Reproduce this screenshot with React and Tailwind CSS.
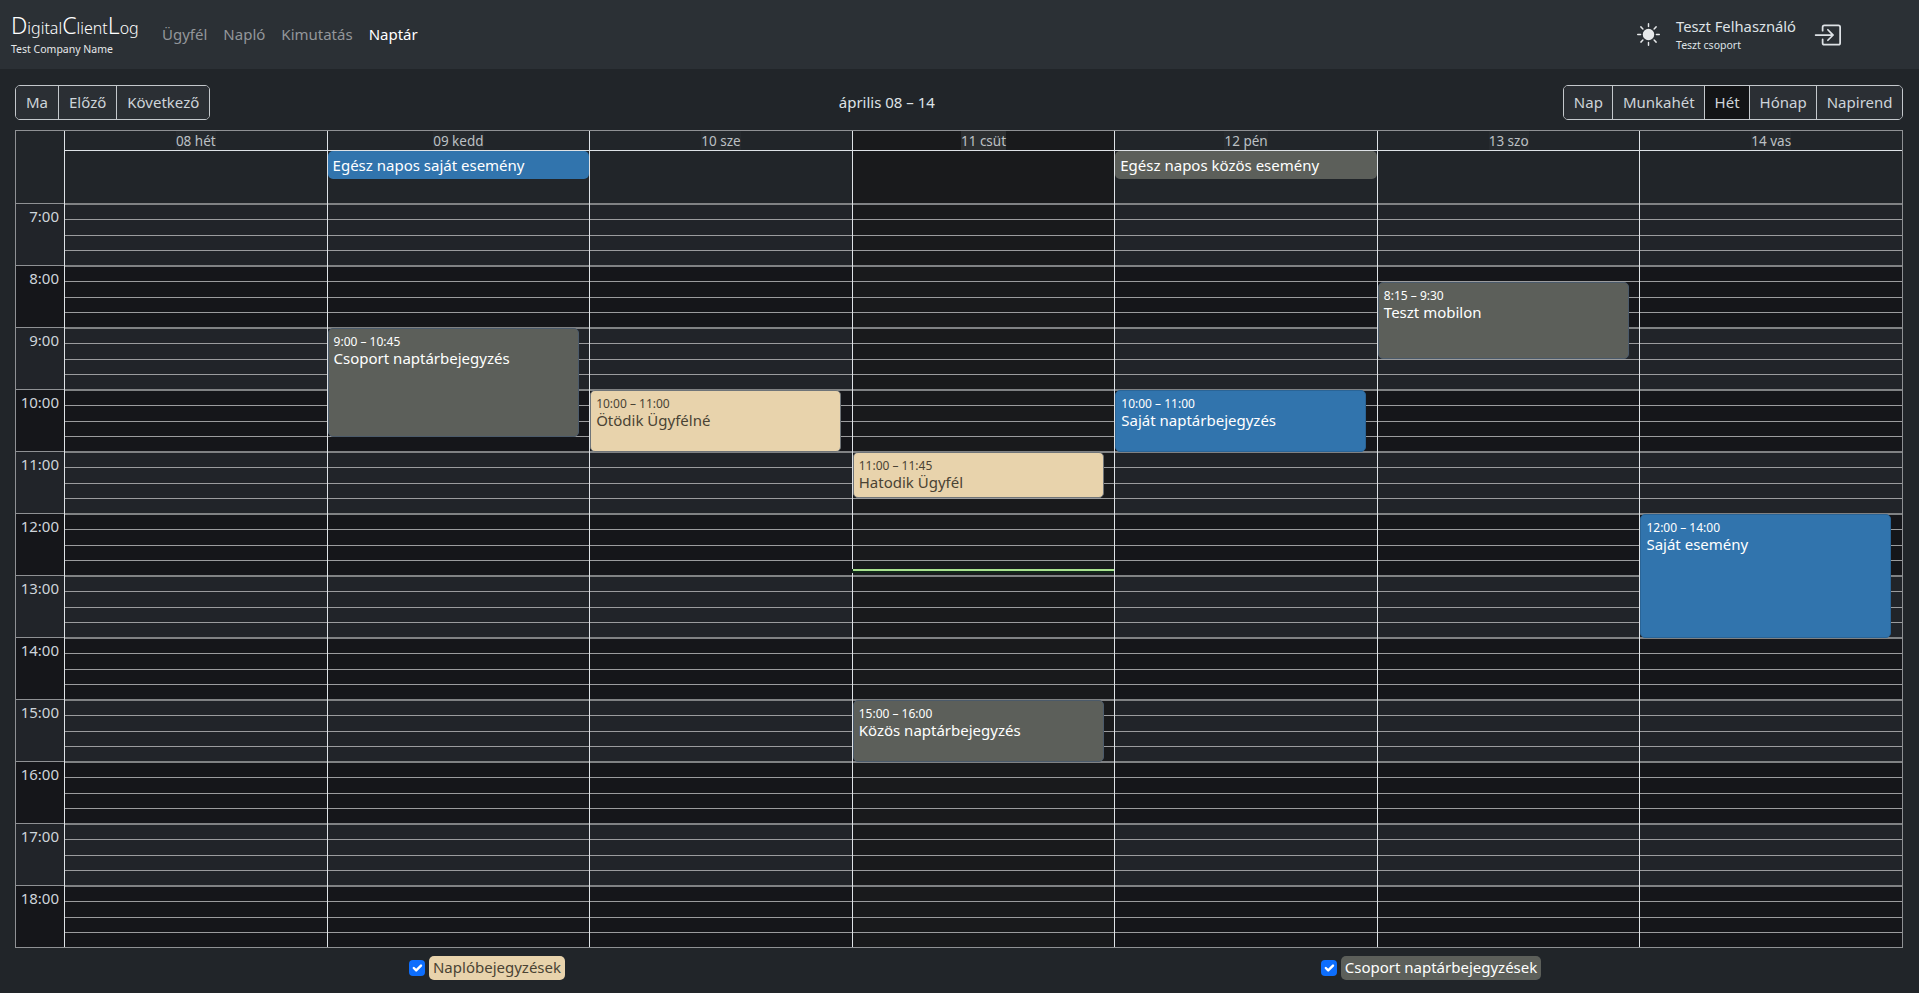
import React from "react";
import { BsBrightnessHighFill, BsBoxArrowInRight } from "react-icons/bs";

const hours = ["7:00", "8:00", "9:00", "10:00", "11:00", "12:00", "13:00", "14:00", "15:00", "16:00", "17:00", "18:00"];

const eventTone = {
  group: "bg-[#5c5f5a] border-[#4b5a6a] text-white",
  own: "bg-[#3174ad] border-[#2a6496] text-white",
  client: "bg-[#e8d3ac] border-[#6f7478] text-[#4a4334]",
};

const days = [
  { label: "08 hét", events: [] },
  {
    label: "09 kedd",
    allDay: { text: "Egész napos saját esemény", cls: "bg-[#3174ad]" },
    events: [{ time: "9:00 – 10:45", title: "Csoport naptárbejegyzés", tone: "group", pos: "top-[125px] h-[109px]" }],
  },
  {
    label: "10 sze",
    events: [{ time: "10:00 – 11:00", title: "Ötödik Ügyfélné", tone: "client", pos: "top-[187px] h-[62px]" }],
  },
  {
    label: "11 csüt",
    today: true,
    events: [
      { time: "11:00 – 11:45", title: "Hatodik Ügyfél", tone: "client", pos: "top-[249px] h-[46px]" },
      { time: "15:00 – 16:00", title: "Közös naptárbejegyzés", tone: "group", pos: "top-[497px] h-[62px]" },
    ],
  },
  {
    label: "12 pén",
    allDay: { text: "Egész napos közös esemény", cls: "bg-[#5c5f5a]" },
    events: [{ time: "10:00 – 11:00", title: "Saját naptárbejegyzés", tone: "own", pos: "top-[187px] h-[62px]" }],
  },
  {
    label: "13 szo",
    events: [{ time: "8:15 – 9:30", title: "Teszt mobilon", tone: "group", pos: "top-[79px] h-[77px]" }],
  },
  {
    label: "14 vas",
    events: [{ time: "12:00 – 14:00", title: "Saját esemény", tone: "own", pos: "top-[311px] h-[124px]" }],
  },
];

function ButtonGroup({ items, active, pad }) {
  return (
    <div className="flex h-[35px] rounded-[5px] border border-[#c4c8cc] overflow-hidden">
      {items.map((it, i) => (
        <button
          key={it}
          className={`text-[15px] leading-none text-[#ced4da] ${pad} ${i > 0 ? "border-l border-[#c4c8cc]" : ""} ${
            it === active ? "bg-[#131416]" : "bg-[#2b2f34]"
          }`}
        >
          {it}
        </button>
      ))}
    </div>
  );
}

function Check() {
  return (
    <span className="flex h-[16px] w-[16px] items-center justify-center rounded-[4px] bg-[#0d6efd]">
      <svg viewBox="0 0 20 20" className="h-[16px] w-[16px]" fill="none" stroke="#fff" strokeWidth="3" strokeLinecap="round" strokeLinejoin="round">
        <path d="M6 10l3 3l6-6" />
      </svg>
    </span>
  );
}

function HourBlock({ index, today }) {
  const bg = today ? "bg-[#191a1c]" : index % 2 === 0 ? "bg-[#212429]" : "bg-[#15161a]";
  return (
    <div className={`flex h-[62px] flex-col border-t-2 border-[#808284] ${bg}`}>
      <div className="flex-1" />
      <div className="flex-1 border-t border-[#9b9c9e]" />
      <div className="flex-1 border-t border-[#9b9c9e]" />
      <div className="flex-1 border-t border-[#9b9c9e]" />
    </div>
  );
}

function Event({ ev }) {
  return (
    <div className={`absolute left-0 w-[251px] overflow-hidden rounded-[5px] border px-[5px] pt-[4px] ${eventTone[ev.tone]} ${ev.pos}`}>
      <div className="text-[12px] leading-[17px]">{ev.time}</div>
      <div className="text-[15px] leading-[17px]">{ev.title}</div>
    </div>
  );
}

export default function App() {
  return (
    <div className="h-[993px] overflow-hidden bg-[#212529] font-['Noto_Sans',sans-serif]">
      <nav className="flex h-[69px] items-center bg-[#2b3035] pl-[11px] pr-[78px]">
        <div className="w-[151px]">
          <div className="flex items-baseline font-light leading-[26px] text-white">
            <span className="text-[23px]">D</span>
            <span className="text-[16px]">igital</span>
            <span className="text-[23px]">C</span>
            <span className="text-[16px]">lient</span>
            <span className="text-[23px]">L</span>
            <span className="text-[16px]">og</span>
          </div>
          <div className="text-[10.5px] leading-[16px] text-[#e6e8ea]">Test Company Name</div>
        </div>
        <div className="flex gap-[16px] text-[15px]">
          <a className="text-[#93969a]">Ügyfél</a>
          <a className="text-[#93969a]">Napló</a>
          <a className="text-[#93969a]">Kimutatás</a>
          <a className="text-white">Naptár</a>
        </div>
        <div className="ml-auto flex items-center">
          <BsBrightnessHighFill className="mr-[16px] text-[23px] text-[#e6e8ea]" />
          <div className="mr-[17px]">
            <div className="text-[14.75px] leading-[20px] text-[#dee2e6]">Teszt Felhasználó</div>
            <div className="text-[10.5px] leading-[18px] text-[#dee2e6]">Teszt csoport</div>
          </div>
          <BsBoxArrowInRight className="text-[28px] text-[#dee2e6]" />
        </div>
      </nav>

      <div className="ml-[15px] mr-[16px] mt-[16px] flex items-center justify-between">
        <ButtonGroup items={["Ma", "Előző", "Következő"]} pad="px-[10px]" />
        <div className="text-[15px] text-[#dee2e6]">április 08 – 14</div>
        <ButtonGroup items={["Nap", "Munkahét", "Hét", "Hónap", "Napirend"]} active="Hét" pad="px-[9.5px]" />
      </div>

      <div className="ml-[15px] mr-[16px] mt-[10px] border border-[#8f9194]">
        <div className="flex">
          <div className="h-[72px] w-[48px] shrink-0" />
          <div className="grid flex-1 grid-cols-7">
            {days.map((d) => (
              <div key={d.label} className={`border-l border-[#dee2e6] ${d.today ? "bg-[#191a1c]" : ""}`}>
                <div className="flex h-[20px] justify-center border-b border-[#dee2e6]">
                  <span className={`text-[13.5px] leading-[21px] text-[#bcc0c4] ${d.today ? "bg-[#2c2e30]" : "bg-[#262a2e]"}`}>{d.label}</span>
                </div>
                <div className="h-[52px]">
                  {d.allDay && (
                    <div className={`h-[28px] rounded-[5px] px-[5px] text-[15px] leading-[28px] text-white ${d.allDay.cls}`}>{d.allDay.text}</div>
                  )}
                </div>
              </div>
            ))}
          </div>
        </div>

        <div className="flex">
          <div className="w-[48px] shrink-0">
            {hours.map((h, i) => (
              <div
                key={h}
                className={`h-[62px] border-t border-[#8f9194] pr-[5px] text-right text-[15px] leading-[24px] text-[#ced4da] ${
                  i % 2 === 0 ? "bg-[#212429]" : "bg-[#15161a]"
                }`}
              >
                {h}
              </div>
            ))}
          </div>
          <div className="grid flex-1 grid-cols-7">
            {days.map((d) => (
              <div key={d.label} className="relative border-l border-[#dee2e6]">
                {hours.map((h, i) => (
                  <HourBlock key={h} index={i} today={d.today} />
                ))}
                {d.today && <div className="absolute inset-x-0 top-[366px] h-[2px] bg-[#a9e28f] shadow-[0_1px_0_1px_#10291a]" />}
                {d.events.map((ev) => (
                  <Event key={ev.title} ev={ev} />
                ))}
              </div>
            ))}
          </div>
        </div>
      </div>

      <div className="ml-[15px] mr-[16px] mt-[8px] grid grid-cols-2">
        <div className="flex items-center justify-center gap-[4px]">
          <Check />
          <span className="h-[24px] rounded-[5px] bg-[#e8d3ac] px-[4px] text-[15px] leading-[23px] text-[#4a4334]">Naplóbejegyzések</span>
        </div>
        <div className="flex items-center justify-center gap-[4px]">
          <Check />
          <span className="h-[24px] rounded-[5px] bg-[#5c5f5a] px-[4px] text-[15px] leading-[23px] text-white">Csoport naptárbejegyzések</span>
        </div>
      </div>
    </div>
  );
}
